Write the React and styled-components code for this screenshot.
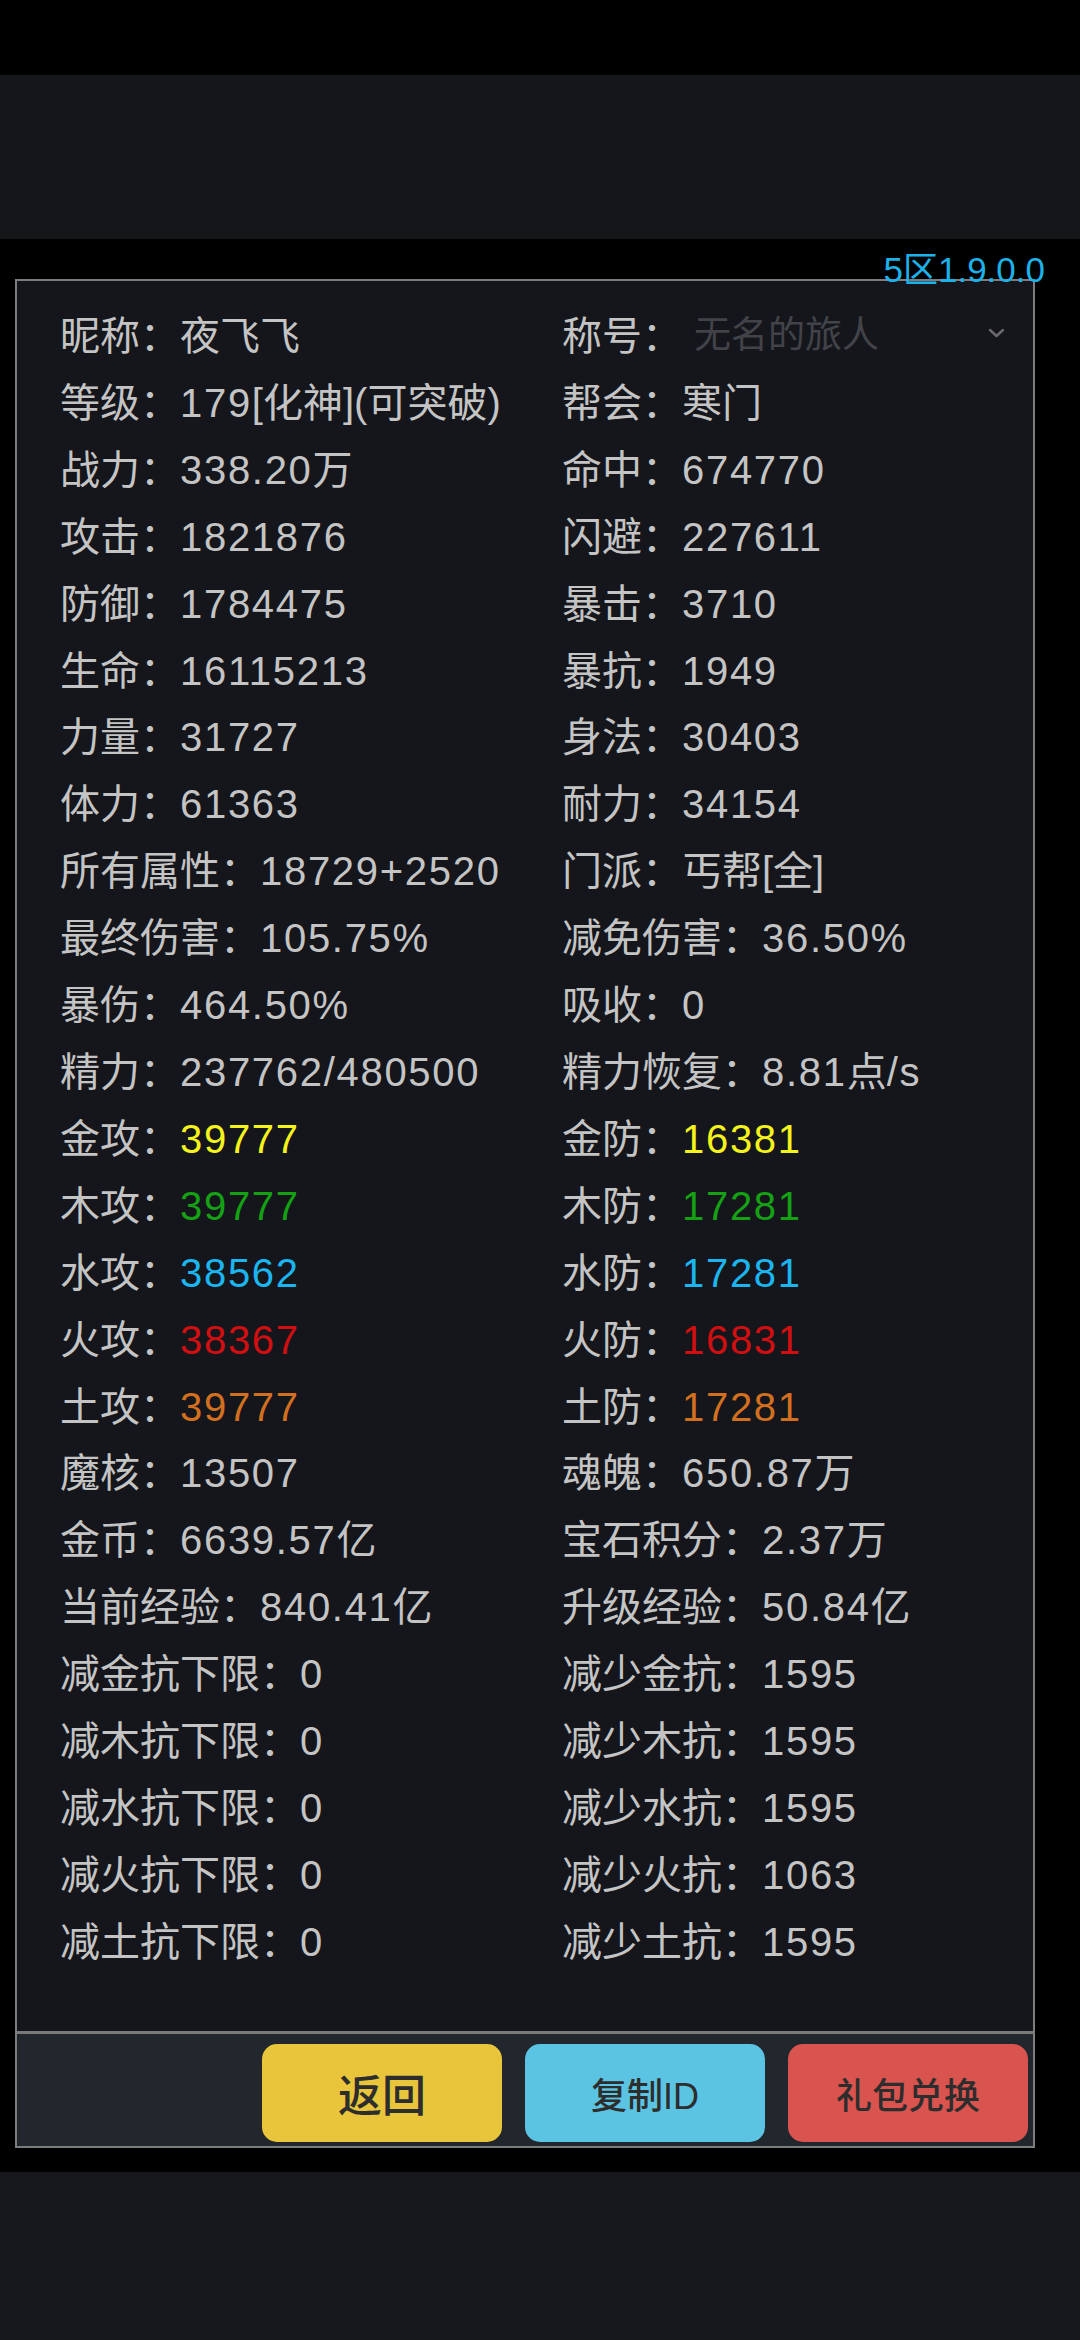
import React from "react";
import styled, { createGlobalStyle } from "styled-components";

const Global = createGlobalStyle`
  html, body { margin: 0; padding: 0; background: #000; }
  body { width: 1080px; height: 2340px; overflow: hidden; font-family: "Liberation Sans", "Noto Sans CJK SC", sans-serif; }
  * { box-sizing: border-box; }
`;

const Page = styled.div`
  width: 1080px;
  height: 2340px;
  display: flex;
  flex-direction: column;
  background: #000;
`;

const StatusBar = styled.div`
  height: 75px;
  background: #000;
  flex: none;
`;

const NavBand = styled.div`
  height: 164px;
  background: #15161a;
  flex: none;
`;

const Body = styled.div`
  position: relative;
  flex: none;
  background: #000;
  padding: 40px 45px 24px 15px;
`;

const Version = styled.div`
  position: absolute;
  top: 13px;
  right: 35px;
  font-size: 35px;
  line-height: 1;
  color: #1cb1e8;
  z-index: 2;
`;

const Panel = styled.div`
  width: 1020px;
  border: 2px solid #7d7d7d;
  background: #15161c;
`;

const Grid = styled.div`
  display: grid;
  grid-template-columns: 502px 1fr;
  padding: 22px 0 55px 43px;
  font-size: 40px;
  line-height: 66.9px;
  color: #c4c4c4;
`;

const Cell = styled.div`
  display: flex;
  white-space: nowrap;
  align-items: center;
`;

const Label = styled.span`
  color: #c4c4c4;
`;

const Value = styled.span`
  color: ${(p) => p.$color || "#c4c4c4"};
`;

const Num = styled.span`
  letter-spacing: 1.7px;
`;

const Select = styled.div`
  flex: 1;
  display: flex;
  align-items: center;
  justify-content: space-between;
  padding: 0 28px 0 12px;
  color: #424348;
  font-size: 37px;
`;

const Chevron = styled.svg`
  width: 17px;
  height: 10px;
  margin-top: -6px;
`;

const Footer = styled.div`
  border-top: 3px solid #7a7a7a;
  background: #22262d;
  height: 115px;
  display: flex;
  justify-content: flex-end;
  gap: 23px;
  padding: 10px 5px 0 0;
`;

const Button = styled.div`
  width: 240px;
  height: 98px;
  border-radius: 15px;
  background: ${(p) => p.$bg};
  color: #2d2d2d;
  font-size: ${(p) => p.$size || 36}px;
  font-weight: 500;
  display: flex;
  align-items: center;
  justify-content: center;
`;

const Filler = styled.div`
  flex: 1;
  background: #17181c;
`;

const Y = "#f4f41a";
const G = "#14a114";
const B = "#1bb5f0";
const R = "#d10f10";
const O = "#d3701f";

const rows = [
  [["昵称：", "夜飞飞"], null],
  [["等级：", "179[化神](可突破)"], ["帮会：", "寒门"]],
  [["战力：", "338.20万"], ["命中：", "674770"]],
  [["攻击：", "1821876"], ["闪避：", "227611"]],
  [["防御：", "1784475"], ["暴击：", "3710"]],
  [["生命：", "16115213"], ["暴抗：", "1949"]],
  [["力量：", "31727"], ["身法：", "30403"]],
  [["体力：", "61363"], ["耐力：", "34154"]],
  [["所有属性：", "18729+2520"], ["门派：", "丐帮[全]"]],
  [["最终伤害：", "105.75%"], ["减免伤害：", "36.50%"]],
  [["暴伤：", "464.50%"], ["吸收：", "0"]],
  [["精力：", "237762/480500"], ["精力恢复：", "8.81点/s"]],
  [["金攻：", "39777", Y], ["金防：", "16381", Y]],
  [["木攻：", "39777", G], ["木防：", "17281", G]],
  [["水攻：", "38562", B], ["水防：", "17281", B]],
  [["火攻：", "38367", R], ["火防：", "16831", R]],
  [["土攻：", "39777", O], ["土防：", "17281", O]],
  [["魔核：", "13507"], ["魂魄：", "650.87万"]],
  [["金币：", "6639.57亿"], ["宝石积分：", "2.37万"]],
  [["当前经验：", "840.41亿"], ["升级经验：", "50.84亿"]],
  [["减金抗下限：", "0"], ["减少金抗：", "1595"]],
  [["减木抗下限：", "0"], ["减少木抗：", "1595"]],
  [["减水抗下限：", "0"], ["减少水抗：", "1595"]],
  [["减火抗下限：", "0"], ["减少火抗：", "1063"]],
  [["减土抗下限：", "0"], ["减少土抗：", "1595"]],
];

function splitRuns(text) {
  return text.split(/([0-9.%+/]+)/).filter(Boolean);
}

function Stat({ item }) {
  const [label, value, color] = item;
  return (
    <Cell>
      <Label>{label}</Label>
      <Value $color={color}>
        {splitRuns(value).map((part, i) =>
          /^[0-9.%+/]+$/.test(part) ? <Num key={i}>{part}</Num> : <span key={i}>{part}</span>
        )}
      </Value>
    </Cell>
  );
}

export default function App() {
  return (
    <Page>
      <Global />
      <StatusBar />
      <NavBand />
      <Body>
        <Version>5区1.9.0.0</Version>
        <Panel>
          <Grid>
            {rows.map((r, i) => (
              <React.Fragment key={i}>
                <Stat item={r[0]} />
                {r[1] ? (
                  <Stat item={r[1]} />
                ) : (
                  <Cell>
                    <Label>称号：</Label>
                    <Select>
                      <span>无名的旅人</span>
                      <Chevron viewBox="0 0 17 10">
                        <polyline points="2,2 8.5,8 15,2" fill="none" stroke="#6a6a6e" strokeWidth="2.4" strokeLinecap="round" strokeLinejoin="round" />
                      </Chevron>
                    </Select>
                  </Cell>
                )}
              </React.Fragment>
            ))}
          </Grid>
          <Footer>
            <Button $bg="#e8c53b" $size={44}>返回</Button>
            <Button $bg="#5bc4e3">复制ID</Button>
            <Button $bg="#d9534f">礼包兑换</Button>
          </Footer>
        </Panel>
      </Body>
      <Filler />
    </Page>
  );
}
